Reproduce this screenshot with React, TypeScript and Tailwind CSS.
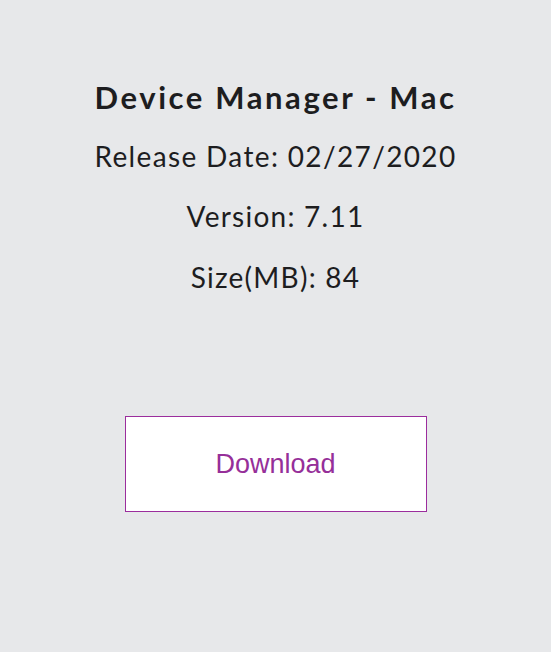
export default function App() {
  return (
    <div className="min-h-[652px] w-full bg-[#e7e8ea] pt-[76px] text-[#1d1d1f] [font-family:Lato,'Noto_Sans',sans-serif]">
      <div className="flex flex-col items-center text-center">
        <h1 className="text-[31px] font-bold leading-[42px] tracking-[2.6px]">Device Manager - Mac</h1>
        <p className="mt-[17px] text-[28px] leading-[42px] tracking-[1.35px]">Release Date: 02/27/2020</p>
        <p className="mt-[18px] text-[28px] leading-[42px] tracking-[1.25px]">Version: 7.11</p>
        <p className="mt-[19px] text-[28px] leading-[42px] tracking-[1.25px]">Size(MB): 84</p>
        <button className="mt-[118px] flex h-[96px] w-[302px] items-center justify-center border border-[#9b2d9d] bg-white text-[27px] text-[#962f99] [font-family:'Liberation_Sans',Arial,sans-serif]">
          Download
        </button>
      </div>
    </div>
  );
}
